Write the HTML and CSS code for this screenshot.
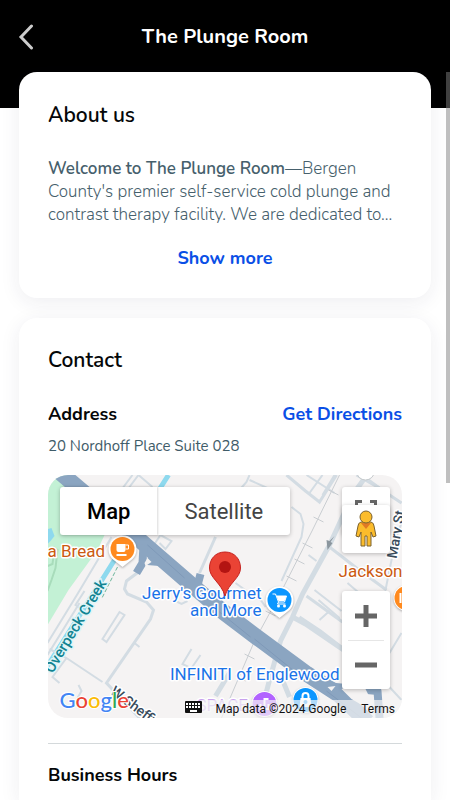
FILE: index.html
```html
<!DOCTYPE html>
<html lang="en">
<head>
<meta charset="utf-8">
<meta name="viewport" content="width=device-width, initial-scale=1">
<title>The Plunge Room</title>
<link rel="stylesheet" href="styles.css">
</head>
<body>
<div class="app">
  <header class="topbar">
    <button class="back" type="button" aria-label="Back">
      <svg viewBox="0 0 16 26" width="16" height="26"><path d="M13.500 2 L3 13 L13.500 24"/></svg>
    </button>
    <h1>The Plunge Room</h1>
  </header>
  <div class="scroll-thumb"></div>
  <main class="content">
    <section class="card">
      <h2>About us</h2>
      <p class="about"><strong>Welcome to The Plunge Room</strong>—Bergen County's premier self-service cold plunge and contrast therapy facility. We are dedicated to...</p>
      <button class="link show-more" type="button">Show more</button>
    </section>
    <section class="card contact">
      <h2>Contact</h2>
      <div class="row">
        <h3>Address</h3>
        <a class="link" href="#directions">Get Directions</a>
      </div>
      <p class="address">20 Nordhoff Place Suite 028</p>
      <div class="map">
        <svg class="tiles" viewBox="0 0 355 243" preserveAspectRatio="xMidYMid slice">
          <rect width="355" height="243" fill="#f5f3f3"/>
          <path fill="#c3f1d5" d="M0 0H20L58 58 50 75 21 115 0 150Z"/>
          <path fill="#8ed9ee" d="M0 54 4 53 7 61 3 66 0 69Z"/>
          <path class="path-line" d="M0 91 5 89 7 73 10 75 8 93 4 105 0 116"/>
          <path class="creek" d="M121 0 67 85 45 120 0 191"/>
          <path class="trail" d="M70 92 61 110 54 124"/>
          <g class="street">
            <path d="M64 62 30 119 0 168M32 128 0 180M37 116 28 130 34 134M2 174 19 183 55 207M19 183 5 202 12 208M31 210 34 216 30 223"/>
            <path d="M72 137 77 140 59 167 55 164ZM87 168 92 172M144 174 135 189 141 192M153 180 144 193"/>
            <path d="M85 0 70 20M91 0 76 20M91 0 105 12M112 68 118 74 124 66 113 60 107 69"/>
            <path d="M202 0 199 7 192 15M202 5 222 14"/>
            <path d="M244 32 253 39 256 49 254 62 234 106M261 80 269 86M188 108 206 121 214 126 218 132"/>
            <path d="M315 0 341 19 354 28M354 48 348 65 338 115M300 108 314 120M267 115 294 136M272 145 282 136M271 125 292 143M342 178 354 158M342 212 354 225"/>
            <path d="M128 126 134 129 140 126M287 0 275 20M259 0 287 18M262 18 275 0"/>
          </g>
          <g class="street wide">
            <path d="M239 0 258 16 272 27 289 0M91 97 79 106 77 114 80 119 99 127 106 135 103 144 59 208 92 243"/>
            <path d="M282 72 309 93 339 115M309 0 330 12 354 28M252 142 273 156 299 176M259 121 295 147M168 62 152 98"/>
          </g>
          <g class="street broad">
            <path d="M318 2 305 20 282 70 255 119 245 142 233 166 222 205 216 228"/>
            <path d="M245 142 258 149 299 177M235 205 242 222M182 198 168 221"/>
          </g>
          <g class="rail">
            <path d="M292 0 265 55 232 120 207 166 174 243"/>
            <path d="M281 15 291 20M266 42 276 47M255 68 265 73M247 84 257 89M239 101 249 106M218 136 228 141M208 155 218 160M197 179 207 184M188 201 198 206"/>
          </g>
          <path class="highway" d="M12 -3 91 64 143 109 176 137 209 162 258 198 292 220 320 247"/>
          <path class="highway ramp" d="M96 70 95 88 89 98M100 86 112 87M153 99 149 114 138 110M278 211 330 216 332 243"/>
          <path fill="#f5f3f3" d="M97 88 100 83 104 87 98 91ZM280 212 288 211 284 216ZM294 214 304 210 317 212 321 220 316 231 304 224Z"/>
          <path class="lane" d="M100 70 137 103M172 137 203 162M207 164 249 198M279 216 314 243"/>
          <path d="M287 61 283 67 285 68 280 75 279 65 282 66Z" fill="#8b969e"/>
          <circle cx="318" cy="-4" r="9" fill="#fff" stroke="#c4c8cb"/>
          <g class="label">
            <text class="food" x="0" y="82">a Bread</text>
            <text class="food" x="291" y="102">Jackson</text>
            <text x="214" y="124" text-anchor="end">Jerry's Gourmet</text>
            <text x="214" y="141" text-anchor="end">and More</text>
            <text x="292" y="205" text-anchor="end">INFINITI of Englewood</text>
            <text class="space" x="149" y="236">SPACE</text>
            <text class="water" transform="translate(5 199) rotate(-59)">Overpeck Creek</text>
            <text class="road" transform="translate(349 84) rotate(-80)">Mary St</text>
            <text class="road" transform="translate(62 218) rotate(37)">W Sheffield</text>
          </g>
          <g class="poi">
            <path d="M75 92 65 84A14 14 0 1 1 85 84Z" fill="#fff"/>
            <circle cx="75" cy="74" r="12" fill="#ff8a1f"/>
            <path d="M69 69H78V75Q78 77 76 77H71Q69 77 69 75ZM69 79H79V81H69Z" fill="#fff"/>
            <path d="M78 70H81V74H78" fill="none" stroke="#fff" stroke-width="1"/>
          </g>
          <g class="poi">
            <path d="M232 143 222 135A14 14 0 1 1 242 135Z" fill="#fff"/>
            <circle cx="232" cy="125" r="12" fill="#0b96ff"/>
            <path d="M225 119H228L231 127H237L239 121H229M231 127 230 129H238" fill="none" stroke="#fff" stroke-width="1"/>
            <path d="M229 121H239L237 126H231Z" fill="#fff"/>
            <circle cx="231" cy="131" r="1.500" fill="#fff"/><circle cx="237" cy="131" r="1.500" fill="#fff"/>
          </g>
          <g class="poi">
            <circle cx="217" cy="229" r="13" fill="#fff"/><circle cx="217" cy="229" r="12" fill="#b263ff"/>
            <path d="M217 223V232M217 224H221M213 229V234H221V229" fill="none" stroke="#fff" stroke-width="2"/>
            <circle cx="258" cy="225" r="13" fill="#fff"/><circle cx="258" cy="225" r="12" fill="#0b96ff"/>
            <path d="M253 223H263L264 232H252Z" fill="#fff"/>
            <path d="M255 224V221A3 3 0 0 1 261 221V224" fill="none" stroke="#fff" stroke-width="2"/>
            <circle cx="258" cy="227" r="2" fill="#0b96ff"/>
            <circle cx="359" cy="123" r="13" fill="#fff"/><circle cx="359" cy="123" r="12" fill="#ff8a1f"/>
            <path d="M353 118V128" stroke="#fff" stroke-width="2"/>
          </g>
          <path d="M177.500 77C168 77 162 84 162 93C162 103 174 108 177.500 121C181 108 193 103 193 93C193 84 187 77 177.500 77Z" fill="#ea4335" stroke="#c5221f"/>
          <circle cx="177.500" cy="92" r="6" fill="#b31412"/>
          <text class="logo" x="12" y="233"><tspan fill="#4285f4">G</tspan><tspan fill="#ea4335">o</tspan><tspan fill="#fbbc04">o</tspan><tspan fill="#4285f4">g</tspan><tspan fill="#34a853">l</tspan><tspan fill="#ea4335">e</tspan></text>
        </svg>
        <div class="map-type">
          <button class="selected" type="button">Map</button>
          <button type="button">Satellite</button>
        </div>
        <button class="control fullscreen" type="button" aria-label="Toggle fullscreen view">
          <svg viewBox="0 0 22 22" width="22" height="22"><path d="M1.500 7V1.500H7M15 1.500H20.500V7M20.500 15V20.500H15M7 20.500H1.500V15"/></svg>
        </button>
        <button class="control pegman" type="button" aria-label="Street View">
          <svg viewBox="0 0 22 38" width="22" height="38">
            <path d="M6 12H16Q19 13 19 16L21 26 18 27 16 22V36H12V26H10V36H6V22L4 27 1 26 3 16Q3 13 6 12Z" fill="#fbbc2c" stroke="#7b6230"/>
            <path d="M6 13H16L11 19Z" fill="#e07a24"/>
            <circle cx="11" cy="7" r="6" fill="#fbbc2c" stroke="#7b6230"/>
          </svg>
        </button>
        <div class="zoom">
          <button type="button" aria-label="Zoom in"><svg viewBox="0 0 22 22" width="22" height="22"><path d="M0 11H22M11 0V22"/></svg></button>
          <button type="button" aria-label="Zoom out"><svg viewBox="0 0 22 22" width="22" height="22"><path d="M0 11H22"/></svg></button>
        </div>
        <div class="credits">
          <button type="button" aria-label="Keyboard shortcuts">
            <svg viewBox="0 0 17 12" width="17" height="12"><path fill="#111" d="M1 0H16Q17 0 17 1V11Q17 12 16 12H1Q0 12 0 11V1Q0 0 1 0Z"/><path stroke="#fff" stroke-width="2" stroke-dasharray="2 1" d="M1 3H16M1 6H16"/><path stroke="#fff" stroke-width="2" d="M5 10H12"/></svg>
          </button>
          <span>Map data ©2024 Google</span>
          <a href="#terms">Terms</a>
        </div>
      </div>
      <hr>
      <h3>Business Hours</h3>
    </section>
  </main>
</div>
</body>
</html>
```
FILE: styles.css
```css
* { box-sizing: border-box; }
body {
  margin: 0;
  background: #fff;
  color: #050708;
  font-family: Nunito, Lato, sans-serif;
}
h1, h2, h3, p { margin: 0; }
button {
  margin: 0;
  padding: 0;
  border: 0;
  background: none;
  font: inherit;
  color: inherit;
  cursor: pointer;
}
.app {
  position: relative;
  display: flex;
  flex-direction: column;
  min-height: 100vh;
  overflow: hidden;
}
.topbar {
  display: grid;
  grid-template-columns: 48px 1fr 48px;
  align-items: center;
  height: 108px;
  padding-bottom: 34px;
  background: #000;
  color: #fff;
}
.topbar h1 {
  font-size: 20px;
  line-height: 28px;
  font-weight: 700;
  text-align: center;
}
.back {
  display: flex;
  padding-left: 18px;
}
.back path {
  fill: none;
  stroke: #ccc;
  stroke-width: 3;
  stroke-linecap: round;
}
.scroll-thumb {
  position: absolute;
  top: 72px;
  right: 0;
  z-index: 2;
  width: 4px;
  height: 411px;
  background: rgba(128, 128, 128, 0.5);
}
.content {
  flex: 1;
  display: flex;
  flex-direction: column;
  gap: 20px;
  margin-top: -36px;
  padding: 0 19px;
}
.card {
  padding: 29px 29px 28px;
  border-radius: 18px;
  background: #fff;
  box-shadow: 0 4px 20px rgba(40, 40, 80, 0.08);
}
.contact {
  flex: 1;
  padding-top: 28px;
  padding-bottom: 10px;
  border-radius: 18px 18px 0 0;
}
.card h2 {
  font-size: 21px;
  line-height: 28px;
  font-weight: 600;
}
.card h3 {
  font-size: 18px;
  line-height: 24px;
  font-weight: 700;
}
.about {
  margin-top: 28px;
  color: #46606c;
  font-size: 17px;
  line-height: 23px;
  font-weight: 300;
}
.about strong { font-weight: 600; }
.link {
  color: #0a4fe6;
  font-size: 18px;
  line-height: 24px;
  font-weight: 700;
  text-decoration: none;
}
.show-more {
  display: block;
  margin: 20px auto 0;
}
.row {
  display: flex;
  align-items: center;
  justify-content: space-between;
  margin-top: 28px;
}
.address {
  margin-top: 10px;
  color: #3f5c69;
  font-size: 15px;
  line-height: 20px;
}
.map {
  position: relative;
  height: 243px;
  margin-top: 19px;
  border-radius: 20px;
  overflow: hidden;
  font-family: Roboto, sans-serif;
}
.tiles {
  display: block;
  width: 100%;
  height: 100%;
}
.street path, .rail path, .creek, .trail, .highway, .lane, .path-line { fill: none; }
.street { stroke: #d3dce3; stroke-width: 2; }
.wide { stroke-width: 3; }
.broad { stroke-width: 5; }
.rail { stroke: #c9cdd1; stroke-width: 1; }
.creek { stroke: #8ed9ee; stroke-width: 5; }
.trail { stroke: #6cb59b; stroke-dasharray: 4 2; }
.path-line { stroke: #a8dcbb; stroke-width: 2; }
.highway { stroke: #8ba5c1; stroke-width: 16; stroke-linejoin: round; }
.ramp { stroke-width: 8; }
.lane { stroke: #7f99b8; stroke-width: 1; }
.label {
  fill: #1a73e8;
  stroke: #fff;
  stroke-width: 3;
  stroke-linejoin: round;
  paint-order: stroke;
  font-size: 17px;
}
.label .food { fill: #cb5a10; }
.label .water { fill: #128391; font-size: 15px; font-weight: 500; stroke: #def5f8; }
.label .road { fill: #384b5b; font-size: 14px; font-weight: 500; }
.label .space { fill: #c9a2ed; }
.poi { filter: drop-shadow(0 1px 1px rgba(0, 0, 0, 0.3)); }
.logo {
  font-family: Lato, sans-serif;
  font-size: 22px;
  font-weight: 500;
  stroke: #fff;
  stroke-width: 2;
  paint-order: stroke;
}
.map-type {
  position: absolute;
  top: 12px;
  left: 12px;
  display: flex;
  height: 48px;
  border-radius: 3px;
  background: #fff;
  box-shadow: 0 1px 4px rgba(0, 0, 0, 0.25);
  font-size: 22px;
  color: #444;
}
.map-type button { padding: 0 27px; }
.map-type .selected {
  color: #000;
  font-weight: 500;
  box-shadow: 1px 0 2px rgba(0, 0, 0, 0.15);
}
.control {
  position: absolute;
  right: 12px;
  display: grid;
  place-items: center;
  width: 48px;
  height: 48px;
  border-radius: 3px;
  background: #fff;
  box-shadow: 0 1px 4px rgba(0, 0, 0, 0.25);
}
.fullscreen { top: 12px; }
.pegman { top: 30px; }
.fullscreen path { fill: none; stroke: #666; stroke-width: 3; }
.zoom {
  position: absolute;
  top: 116px;
  right: 12px;
  width: 48px;
  border-radius: 3px;
  background: #fff;
  box-shadow: 0 1px 4px rgba(0, 0, 0, 0.25);
}
.zoom button {
  display: grid;
  place-items: center;
  width: 36px;
  height: 49px;
  margin: 0 6px;
}
.zoom button + button { border-top: 1px solid #e6e6e6; }
.zoom path { stroke: #666; stroke-width: 5; }
.credits {
  position: absolute;
  right: 0;
  bottom: 0;
  display: flex;
  align-items: center;
  height: 18px;
  color: #111;
  font-size: 12px;
  line-height: 18px;
}
.credits button { display: flex; padding-bottom: 4px; }
.credits span {
  padding: 0 8px 0 14px;
  background: rgba(245, 245, 245, 0.7);
}
.credits a {
  padding: 0 7px;
  background: rgba(245, 245, 245, 0.7);
  color: inherit;
  text-decoration: none;
}
hr {
  height: 1px;
  margin: 25px 0 19px;
  border: 0;
  background: #d4d9db;
}
```
